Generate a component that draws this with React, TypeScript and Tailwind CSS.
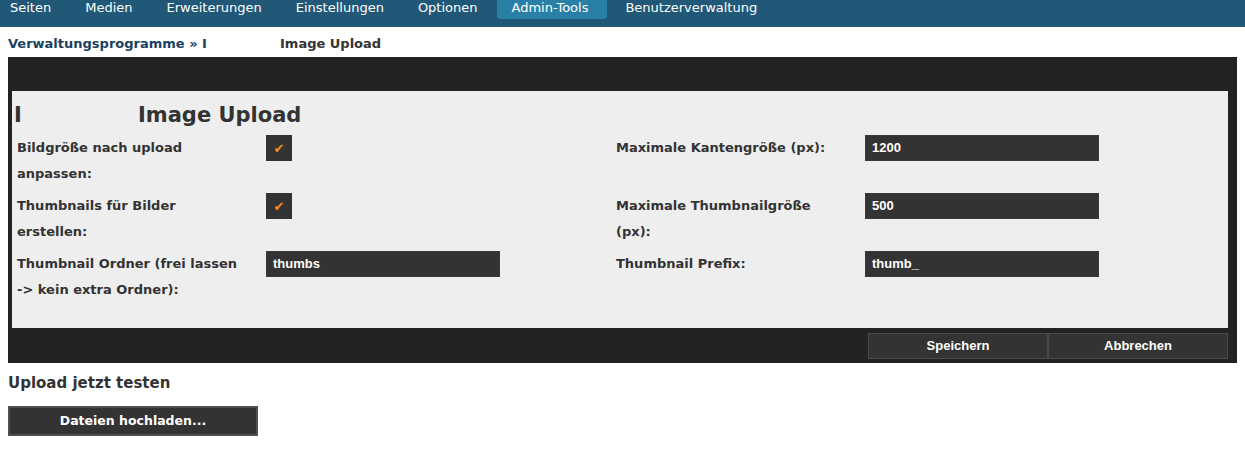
import React from 'react';

const navItems = ['Seiten', 'Medien', 'Erweiterungen', 'Einstellungen', 'Optionen', 'Admin-Tools', 'Benutzerverwaltung'];

const Check: React.FC = () => (
  <div className="w-[26px] h-[26px] bg-[#333] flex items-center justify-center text-[#f0901e] text-[13px] leading-none">
    ✔
  </div>
);

const TextField: React.FC<{ value: string }> = ({ value }) => (
  <div className="w-[234px] h-[26px] bg-[#333] border border-[#3a3a3a] text-white text-[13px] font-bold px-[6px] flex items-center font-['Liberation_Sans',Arial,sans-serif]">
    {value}
  </div>
);

const Label: React.FC<{ children: React.ReactNode }> = ({ children }) => (
  <div className="text-[13px] font-bold text-[#333] leading-[26px] pr-4">{children}</div>
);

const App: React.FC = () => {
  return (
    <div className="min-h-screen bg-white font-['DejaVu_Sans',Verdana,sans-serif]">
      <nav className="h-[27px] bg-[#215877] flex items-start text-[13px] text-white -ml-[7px]">
        {navItems.map((item) => (
          <div
            key={item}
            className={
              item === 'Admin-Tools'
                ? 'h-[19px] pl-[15px] pr-[19px] ml-[2px] mr-[1px] bg-[#2a7fa6] rounded-b-[4px] leading-[16px]'
                : 'h-[19px] px-[17px] leading-[16px]'
            }
          >
            {item}
          </div>
        ))}
      </nav>

      <div className="px-2 pt-[10px] pb-[6px] text-[13px] font-bold leading-[14px] flex">
        <span className="text-[#1b3f60] w-[272px]">Verwaltungsprogramme » I</span>
        <span className="text-[#333]">Image Upload</span>
      </div>

      <div className="mx-2 bg-[#222] pt-[34px] pl-1 pr-[9px]">
        <div className="bg-[#eee] h-[237px] pl-[2px]">
          <h1 className="text-[21px] font-bold text-[#333] leading-[26px] pt-[11px] flex">
            <span className="w-[124px]">I</span>
            <span>Image Upload</span>
          </h1>
          <div className="grid grid-cols-[249px_350px_249px_1fr] gap-y-[6px] pl-[3px] pt-[7px]">
            <Label>
              Bildgröße nach upload
              <br />
              anpassen:
            </Label>
            <div><Check /></div>
            <Label>Maximale Kantengröße (px):</Label>
            <div><TextField value="1200" /></div>

            <Label>
              Thumbnails für Bilder
              <br />
              erstellen:
            </Label>
            <div><Check /></div>
            <Label>
              Maximale Thumbnailgröße
              <br />
              (px):
            </Label>
            <div><TextField value="500" /></div>

            <Label>
              Thumbnail Ordner (frei lassen
              <br />
              -&gt; kein extra Ordner):
            </Label>
            <div><TextField value="thumbs" /></div>
            <Label>Thumbnail Prefix:</Label>
            <div><TextField value="thumb_" /></div>
          </div>
        </div>
        <div className="flex justify-end pt-[5px] pb-[4px] font-['Liberation_Sans',Arial,sans-serif]">
          <button className="w-[180px] h-[26px] bg-[#333] border border-[#4a4a4a] text-white text-[13px] font-bold">
            Speichern
          </button>
          <button className="w-[180px] h-[26px] bg-[#333] border border-[#4a4a4a] text-white text-[13px] font-bold">
            Abbrechen
          </button>
        </div>
      </div>

      <div className="px-2 pt-[10px] text-[15px] font-bold text-[#333] leading-[20px]">Upload jetzt testen</div>
      <div className="px-2 pt-[13px]">
        <button className="w-[250px] h-[30px] bg-[#333] border-2 border-[#4f4f4f] text-white text-[12.5px] font-bold">
          Dateien hochladen...
        </button>
      </div>
    </div>
  );
};

export default App;
